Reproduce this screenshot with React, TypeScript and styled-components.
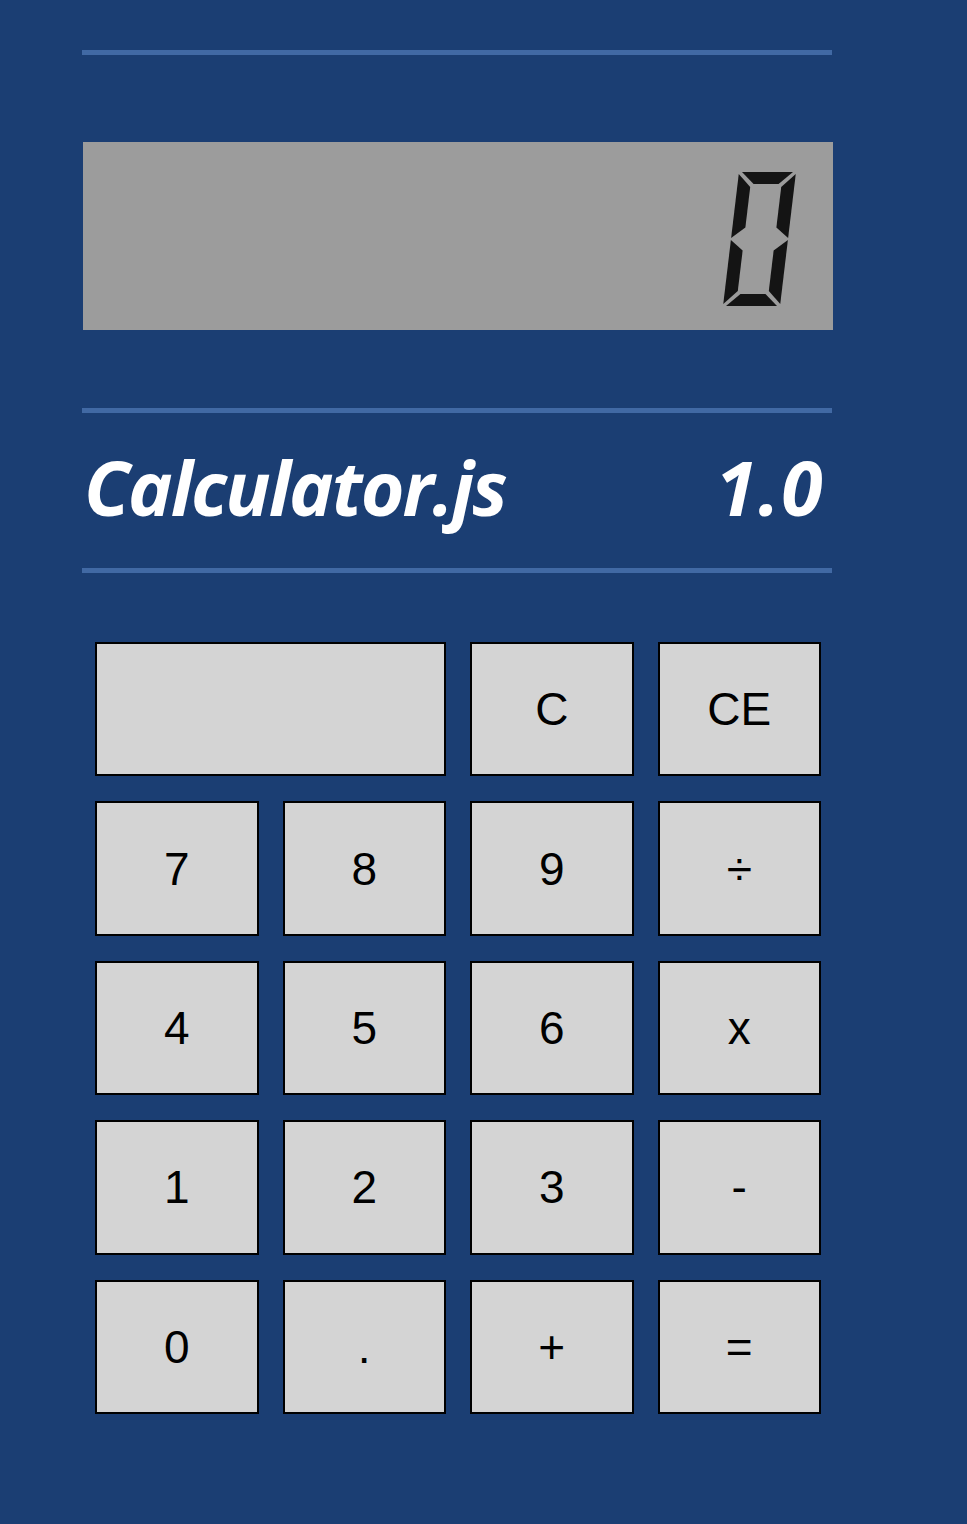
import React from "react";
import styled, { createGlobalStyle } from "styled-components";

const Global = createGlobalStyle`
  html, body {
    margin: 0;
    padding: 0;
    background: #1b3e73;
  }
  body {
    min-height: 1524px;
    font-family: "Liberation Sans", Arial, sans-serif;
  }
`;

const Page = styled.div`
  width: 750px;
  margin-left: 82px;
  padding-top: 50px;
  display: flex;
  flex-direction: column;
`;

const Rule = styled.div<{ $top?: number }>`
  height: 5px;
  background: #4169a4;
  margin-top: ${(p) => p.$top ?? 0}px;
`;

const Display = styled.div`
  margin-top: 87px;
  margin-left: 1px;
  width: 750px;
  height: 188px;
  background: #9c9c9c;
  display: flex;
  justify-content: flex-end;
  align-items: flex-start;
  padding: 30px 36px 0 0;
  box-sizing: border-box;
`;

const TitleRow = styled.div`
  height: 155px;
  display: flex;
  justify-content: space-between;
  align-items: flex-start;
  padding: 37px 8px 0 2px;
  box-sizing: border-box;
`;

const Title = styled.h1<{ $spacing?: number }>`
  margin: 0;
  font-family: "Open Sans", "Noto Sans", sans-serif;
  font-weight: 700;
  font-style: italic;
  font-size: 75px;
  line-height: 1;
  color: #ffffff;
  letter-spacing: ${(p) => p.$spacing ?? -1.9}px;
`;

const Keypad = styled.div`
  margin-top: 69px;
  padding: 0 11px 0 13px;
  display: grid;
  grid-template-columns: repeat(4, 1fr);
  grid-auto-rows: 134.4px;
  gap: 25px 24px;
`;

const Key = styled.button<{ $span?: number }>`
  grid-column: span ${(p) => p.$span ?? 1};
  box-sizing: border-box;
  background: #d4d4d4;
  border: 2px solid #000;
  border-radius: 0;
  padding: 0;
  margin: 0;
  font-family: "Liberation Sans", Arial, sans-serif;
  font-size: 46px;
  color: #000;
  display: flex;
  align-items: center;
  justify-content: center;
  cursor: pointer;
`;

const W = 57;
const H = 134;
const T = 13;
const M = H / 2;

const segs = [
  // top
  `3,0 ${W - 3},0 ${W - 3 - T},${T - 1} ${3 + T},${T - 1}`,
  // bottom
  `${3 + T},${H - T + 1} ${W - 3 - T},${H - T + 1} ${W - 3},${H} 3,${H}`,
  // upper-left
  `0,2 ${T},${T + 2} ${T},${M - 1 - T * 0.8} 0,${M - 1}`,
  // lower-left
  `0,${M + 1} ${T},${M + 1 + T * 0.8} ${T},${H - T - 2} 0,${H - 2}`,
  // upper-right
  `${W},2 ${W - T},${T + 2} ${W - T},${M - 1 - T * 0.8} ${W},${M - 1}`,
  // lower-right
  `${W},${M + 1} ${W - T},${M + 1 + T * 0.8} ${W - T},${H - T - 2} ${W},${H - 2}`,
];

function SegmentZero() {
  return (
    <svg width="74" height="134" viewBox="0 0 74 134" aria-label="0">
      <g transform="translate(16 0) skewX(-6.8)" fill="#141414">
        {segs.map((p, i) => (
          <polygon key={i} points={p} />
        ))}
      </g>
    </svg>
  );
}

const keys: { label: string; span?: number }[] = [
  { label: "", span: 2 },
  { label: "C" },
  { label: "CE" },
  { label: "7" },
  { label: "8" },
  { label: "9" },
  { label: "÷" },
  { label: "4" },
  { label: "5" },
  { label: "6" },
  { label: "x" },
  { label: "1" },
  { label: "2" },
  { label: "3" },
  { label: "-" },
  { label: "0" },
  { label: "." },
  { label: "+" },
  { label: "=" },
];

export default function App() {
  return (
    <>
      <Global />
      <Page>
        <Rule />
        <Display>
          <SegmentZero />
        </Display>
        <Rule $top={78} />
        <TitleRow>
          <Title>Calculator.js</Title>
          <Title $spacing={1.5}>1.0</Title>
        </TitleRow>
        <Rule />
        <Keypad>
          {keys.map((k, i) => (
            <Key key={i} $span={k.span}>
              {k.label}
            </Key>
          ))}
        </Keypad>
      </Page>
    </>
  );
}
